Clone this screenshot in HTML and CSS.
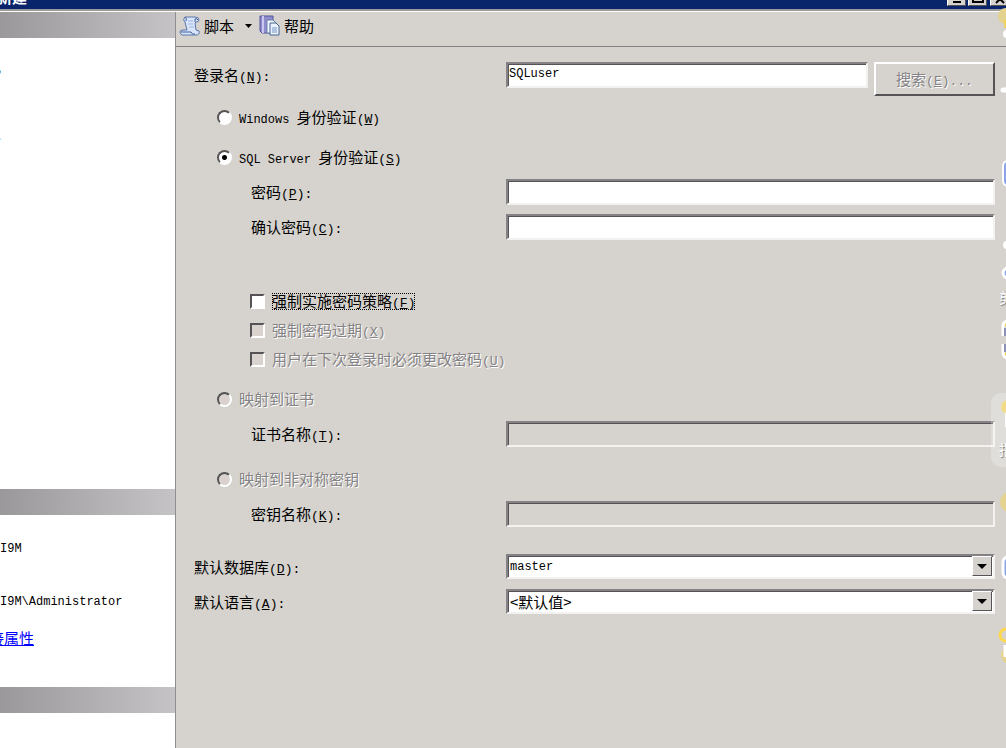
FILE: index.html
```html
<!DOCTYPE html>
<html lang="zh-CN">
<head>
    <meta charset="UTF-8">
    <meta name="viewport" content="width=device-width, initial-scale=1.0">
    <title>登录名 - 新建</title>
    <link rel="stylesheet" href="styles.css">
</head>
<body>
    <header class="titlebar">
        <span class="title">新建</span>
        <div class="window-buttons">
            <button type="button" aria-label="最小化"><svg width="12" height="10"><path d="M2 8h8" stroke="#000" stroke-width="2"/></svg></button>
            <button type="button" aria-label="最大化"><svg width="12" height="10"><path d="M1 0v8h10v-8" fill="none" stroke="#000" stroke-width="2"/></svg></button>
            <button type="button" aria-label="关闭" class="close"><svg width="12" height="10"><path d="M2 1l8 8M10 1l-8 8" stroke="#000" stroke-width="2"/></svg></button>
        </div>
    </header>

    <div class="window">
        <aside class="sidebar">
            <div class="panel-head"></div>
            <div class="panel pages">
                <span class="clipped">,</span>
                <span class="clipped">.</span>
            </div>
            <div class="panel-head"></div>
            <div class="panel connection">
                <p class="latin">I9M</p>
                <p class="latin">I9M\Administrator</p>
                <a href="#">接属性</a>
            </div>
            <div class="panel-head"></div>
            <div class="panel progress"></div>
        </aside>

        <main class="content">
            <div class="toolbar">
                <button type="button">
                    <svg width="22" height="22" viewBox="0 0 22 22">
                        <path d="M6 2h10q4 0 4 3 0 2-3 2l-1 1 1 7 3 1q1 4-3 4H3q-2-1-2-3 0-2 3-2h4L6 7Q3 5 6 2z" fill="#d9e6fa" stroke="#5873a8"/>
                        <path d="M6 2q2 1 1 4M16 7V4q2-1 3 1M2 17h10q1 3 4 2" fill="none" stroke="#3f5c96"/>
                        <path d="M9 6h5M9 9h5M10 12h5" stroke="#9db6e0"/>
                    </svg>
                    脚本
                    <svg class="arrow" width="7" height="4"><path d="M0 0h7L3.500 4z"/></svg>
                </button>
                <button type="button">
                    <svg width="22" height="22" viewBox="0 0 22 22">
                        <path d="M1 1h13v17H3l-2-2z" fill="#8f8dcc" stroke="#55559b"/>
                        <path d="M4 1v17" stroke="#c8c8f0" stroke-width="2"/>
                        <path d="M8 5h6l3 3v10H8z" fill="#f4f8ff" stroke="#6681ad"/>
                        <path d="M11 8h6l3 3v9h-9z" fill="#eaf2ff" stroke="#46658f"/>
                        <path d="M13 13h5M13 15h5M13 17h5" stroke="#7795bd"/>
                    </svg>
                    帮助
                </button>
            </div>

            <form class="login-form">
                <div class="row login-row">
                    <label for="login">登录名<span class="key">(<u>N</u>):</span></label>
                    <input type="text" id="login" value="SQLuser">
                    <button type="button" class="search" disabled>搜索<span class="key">(<u>E</u>)...</span></button>
                </div>
                <div class="choice windows-auth">
                    <input type="radio" name="auth" id="winAuth">
                    <label for="winAuth"><span class="latin">Windows </span>身份验证<span class="key">(<u>W</u>)</span></label>
                </div>
                <div class="choice section">
                    <input type="radio" name="auth" id="sqlAuth" checked>
                    <label for="sqlAuth"><span class="latin">SQL Server </span>身份验证<span class="key">(<u>S</u>)</span></label>
                </div>
                <div class="row nested">
                    <label for="password">密码<span class="key">(<u>P</u>):</span></label>
                    <input type="password" id="password">
                </div>
                <div class="row nested confirm">
                    <label for="confirm">确认密码<span class="key">(<u>C</u>):</span></label>
                    <input type="password" id="confirm">
                </div>

                <div class="policies">
                    <div class="choice">
                        <input type="checkbox" id="policy">
                        <label for="policy" class="focused">强制实施密码策略<span class="key">(<u>F</u>)</span></label>
                    </div>
                    <div class="choice">
                        <input type="checkbox" id="expire" disabled>
                        <label for="expire">强制密码过期<span class="key">(<u>X</u>)</span></label>
                    </div>
                    <div class="choice">
                        <input type="checkbox" id="mustChange" disabled>
                        <label for="mustChange">用户在下次登录时必须更改密码<span class="key">(<u>U</u>)</span></label>
                    </div>
                </div>

                <div class="choice section">
                    <input type="radio" name="auth" id="certAuth" disabled>
                    <label for="certAuth">映射到证书</label>
                </div>
                <div class="row nested">
                    <label for="cert">证书名称<span class="key">(<u>T</u>):</span></label>
                    <input type="text" id="cert" disabled>
                </div>
                <div class="choice key-auth">
                    <input type="radio" name="auth" id="keyAuth" disabled>
                    <label for="keyAuth">映射到非对称密钥</label>
                </div>
                <div class="row nested">
                    <label for="keyName">密钥名称<span class="key">(<u>K</u>):</span></label>
                    <input type="text" id="keyName" disabled>
                </div>
                <div class="row database">
                    <label for="database">默认数据库<span class="key">(<u>D</u>):</span></label>
                    <div class="select-box">
                        <select id="database"><option>master</option></select>
                        <svg class="drop" width="20" height="20"><path d="M4 7h10l-5 5z"/></svg>
                    </div>
                </div>
                <div class="row language">
                    <label for="language">默认语言<span class="key">(<u>A</u>):</span></label>
                    <div class="select-box">
                        <select id="language"><option>&lt;默认值&gt;</option></select>
                        <svg class="drop" width="20" height="20"><path d="M4 7h10l-5 5z"/></svg>
                    </div>
                </div>
            </form>
        </main>
    </div>

    <!-- edge of the desktop dock, over the window -->
    <svg class="dock" width="20" height="748" viewBox="0 0 20 748">
        <circle cx="20" cy="16" r="8" fill="#e3d38f"/>
        <path d="M20 20v8" stroke="#f8d548" stroke-width="3"/>
        <circle cx="21" cy="34" r="4" fill="#fff"/>
        <path d="M17 90h3" stroke="#fff" stroke-width="5" stroke-linecap="round"/>
        <rect x="17" y="161" width="20" height="25" rx="5" fill="#8da4e8" stroke="#fff" stroke-width="2"/>
        <circle cx="21" cy="245" r="4" fill="#fff"/>
        <circle cx="22" cy="273" r="5" fill="#8da4e8" stroke="#fff" stroke-width="3"/>
        <text x="13" y="303">剪</text>
        <path d="M17 336v-10q0-4 4-5M17 344v8q0 5 4 6" fill="none" stroke="#fff" stroke-width="3"/>
        <path d="M19 336v-8M19 344v8" stroke="#8b93bd" stroke-width="2"/>
        <path d="M19 325h2M19 354h2" stroke="#f8d548" stroke-width="3"/>
        <rect x="5" y="393" width="30" height="74" rx="10" fill="#fff" fill-opacity="0.25"/>
        <circle cx="22" cy="407" r="7" fill="#f0dc86"/>
        <rect x="19" y="411" width="10" height="18" rx="4" fill="#fff"/>
        <text x="13" y="455">指</text>
        <circle cx="24" cy="502" r="10" fill="#e3d38f"/>
        <rect x="17" y="557" width="20" height="21" rx="5" fill="#8da4e8" stroke="#fff" stroke-width="3"/>
        <circle cx="24" cy="655" r="9" fill="#e3d38f"/>
        <circle cx="20" cy="635" r="6" fill="none" stroke="#ffd84d" stroke-width="3"/>
        <path d="M19 645v12" stroke="#fff" stroke-width="3"/>
    </svg>
</body>
</html>
```

FILE: styles.css
```css
:root {
  --face: #d6d3ce;
  --shadow: #848284;
  --dark: #555355;
  --light: #ffffff;
  --navy: #08246b;
}

* {
  box-sizing: border-box;
}

body {
  margin: 0;
  position: relative;
  min-height: 100vh;
  display: flex;
  flex-direction: column;
  overflow: hidden;
  background: var(--face);
  color: #000;
  font-family: "Noto Sans CJK SC", sans-serif;
  font-size: 15px;
  line-height: 20px;
}

button,
input,
select {
  font: inherit;
  color: inherit;
  margin: 0;
}

.latin,
.key {
  font-family: "Liberation Mono", monospace;
  font-size: 12px;
  white-space: pre;
}

.key {
  font-size: 13px;
}

label span,
button span {
  line-height: 1;
}

/* Title bar */
.titlebar {
  display: flex;
  justify-content: space-between;
  align-items: flex-end;
  height: 9px;
  background: var(--navy);
  color: #fff;
}

.title {
  font-weight: bold;
  line-height: 18px;
  margin: 0 0 3px -3px;
}

.window-buttons {
  display: flex;
  gap: 2px;
  margin-bottom: 3px;
}

.window-buttons button {
  display: flex;
  justify-content: center;
  align-items: flex-end;
  width: 19px;
  height: 18px;
  padding: 0 0 1px;
  background: var(--face);
  border: 1px solid;
  border-color: var(--light) var(--dark) var(--dark) var(--light);
}

.window-buttons svg {
  flex: none;
}

.window-buttons .close {
  margin: 0 -3px 0 1px;
}

/* Window body */
.window {
  flex: 1;
  display: grid;
  grid-template-columns: 176px 1fr;
  border-top: 2px solid #9c9a9c;
  box-shadow: inset 0 1px var(--light);
  padding-top: 1px;
}

.sidebar {
  display: flex;
  flex-direction: column;
  background: #fff;
  border-right: 1px solid #8f8d8f;
  overflow: hidden;
}

.panel-head {
  height: 26px;
  background: linear-gradient(to right, #9a989a, #c6c3c6);
}

.pages {
  height: 451px;
  padding-top: 18px;
}

.clipped {
  display: block;
  margin-left: -3px;
  height: 68px;
}

.connection {
  height: 172px;
  padding-top: 24px;
}

.connection p {
  margin: 0 0 33px;
}

.connection p + p {
  margin-bottom: 16px;
}

.connection a {
  display: block;
  margin-left: -11px;
  color: #00f;
}

.progress {
  flex: 1;
}

/* Toolbar */
.toolbar {
  display: flex;
  gap: 7px;
  height: 35px;
  padding: 0 3px 6px;
  border-bottom: 1px solid var(--shadow);
}

.toolbar button {
  display: flex;
  align-items: center;
  gap: 3px;
  padding: 0;
  border: 0;
  background: none;
}

.toolbar .arrow {
  margin-left: 8px;
}

/* Form */
.login-form {
  padding: 15px 11px 20px 18px;
}

.row {
  display: grid;
  grid-template-columns: 312px 1fr;
}

.login-row {
  grid-template-columns: 312px 1fr 127px;
}

.row label {
  height: 26px;
  line-height: 26px;
}

.nested {
  margin-top: 12px;
}

.nested label {
  padding-left: 57px;
}

.confirm {
  margin-top: 9px;
}

.row input,
.select-box {
  width: 100%;
  height: 26px;
  padding: 0 1px;
  background: #fff;
  border: 2px solid;
  border-color: var(--shadow) #f4f2f0 #f4f2f0 var(--shadow);
  border-radius: 0;
  box-shadow: inset 1px 1px var(--dark);
  outline: none;
}

.row input {
  padding-bottom: 3px;
  font-family: "Liberation Mono", monospace;
  font-size: 12px;
}

.row input:disabled {
  background: var(--face);
}

.search {
  height: 34px;
  margin-left: 6px;
  padding: 0;
  background: var(--face);
  border: 2px solid;
  border-color: var(--light) var(--dark) var(--dark) var(--light);
}

.search:disabled,
input:disabled + label {
  color: var(--shadow);
  text-shadow: 1px 1px var(--light);
}

.choice {
  display: flex;
  align-items: center;
  gap: 7px;
  height: 20px;
  padding-left: 23px;
}

.windows-auth {
  margin-top: 11px;
}

.section {
  margin-top: 20px;
}

.key-auth {
  margin-top: 22px;
}

.choice input {
  appearance: none;
  flex: none;
  width: 15px;
  height: 15px;
  background: #fff;
  border: 2px solid;
  border-color: var(--dark) var(--light) var(--light) var(--dark);
}

.choice input[type="radio"] {
  border-radius: 50%;
}

.choice input[type="radio"]:checked {
  background: radial-gradient(circle, #000 2px, #fff 3px);
}

.choice input:disabled {
  background: #dad2ce;
}

.policies {
  display: flex;
  flex-direction: column;
  gap: 9px;
  margin-top: 51px;
}

.policies .choice {
  padding-left: 56px;
}

.focused {
  line-height: 16px;
  outline: 1px dotted #000;
  outline-offset: -1px;
}

.database {
  margin-top: 27px;
}

.language {
  margin-top: 9px;
}

.select-box {
  display: flex;
  height: 25px;
}

.select-box select {
  appearance: none;
  flex: 1;
  padding: 0 1px;
  border: 0;
  background: none;
  outline: none;
}

#database {
  font-family: "Liberation Mono", monospace;
  font-size: 12px;
}

.drop {
  background: var(--face);
  border: 1px solid;
  border-color: var(--light) var(--dark) var(--dark) var(--light);
}

.dock {
  position: absolute;
  top: 0;
  right: 0;
  pointer-events: none;
}

.dock text {
  fill: #fff;
  font-size: 14px;
  text-shadow: 1px 1px 1px #777;
}
```
